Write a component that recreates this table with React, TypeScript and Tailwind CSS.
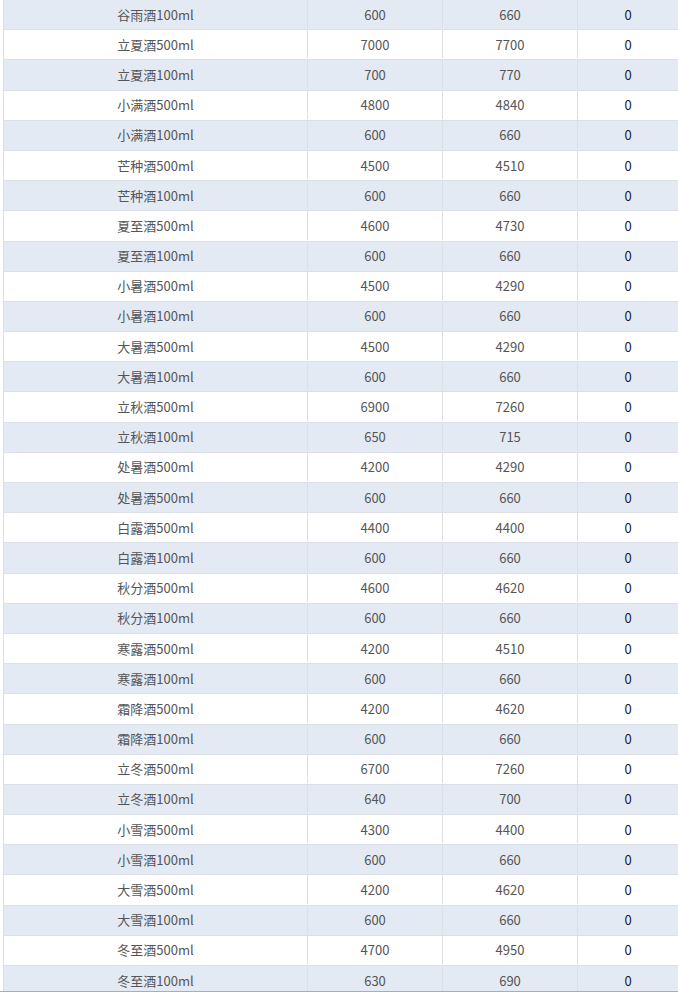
const rows: [string, number, number, number][] = [
  ["谷雨酒100ml", 600, 660, 0],
  ["立夏酒500ml", 7000, 7700, 0],
  ["立夏酒100ml", 700, 770, 0],
  ["小满酒500ml", 4800, 4840, 0],
  ["小满酒100ml", 600, 660, 0],
  ["芒种酒500ml", 4500, 4510, 0],
  ["芒种酒100ml", 600, 660, 0],
  ["夏至酒500ml", 4600, 4730, 0],
  ["夏至酒100ml", 600, 660, 0],
  ["小暑酒500ml", 4500, 4290, 0],
  ["小暑酒100ml", 600, 660, 0],
  ["大暑酒500ml", 4500, 4290, 0],
  ["大暑酒100ml", 600, 660, 0],
  ["立秋酒500ml", 6900, 7260, 0],
  ["立秋酒100ml", 650, 715, 0],
  ["处暑酒500ml", 4200, 4290, 0],
  ["处暑酒500ml", 600, 660, 0],
  ["白露酒500ml", 4400, 4400, 0],
  ["白露酒100ml", 600, 660, 0],
  ["秋分酒500ml", 4600, 4620, 0],
  ["秋分酒100ml", 600, 660, 0],
  ["寒露酒500ml", 4200, 4510, 0],
  ["寒露酒100ml", 600, 660, 0],
  ["霜降酒500ml", 4200, 4620, 0],
  ["霜降酒100ml", 600, 660, 0],
  ["立冬酒500ml", 6700, 7260, 0],
  ["立冬酒100ml", 640, 700, 0],
  ["小雪酒500ml", 4300, 4400, 0],
  ["小雪酒100ml", 600, 660, 0],
  ["大雪酒500ml", 4200, 4620, 0],
  ["大雪酒100ml", 600, 660, 0],
  ["冬至酒500ml", 4700, 4950, 0],
  ["冬至酒100ml", 630, 690, 0],
];

export default function App() {
  return (
    <div className="h-[993px] w-[678px] overflow-hidden bg-white font-['Microsoft_YaHei','Noto_Sans_CJK_SC',sans-serif] text-[13px] leading-none">
      {/* 表格视口：底部有一条深色分隔线 */}
      <div className="h-[992px] overflow-hidden border-b border-[#a4aebe]">
        <div className="ml-[3px] w-[675px] border-l border-[#dcdfe6]">
          {rows.map(([name, a, b, c], i) => (
            <div
              key={i}
              className={`grid h-[30.2px] grid-cols-[304px_135px_135px_1fr] border-b border-[#dcdfe6] pb-[1px] ${
                i % 2 === 0 ? "bg-[#e4eaf4]" : "bg-white"
              }`}
            >
              <div className="flex items-center justify-center border-r border-[#dcdfe6] text-[#555]">{name}</div>
              <div className="flex items-center justify-center border-r border-[#dcdfe6] text-[#555]">{a}</div>
              <div className="flex items-center justify-center border-r border-[#dcdfe6] text-[#555]">{b}</div>
              <div className="flex items-center justify-center text-[#1a1a2e]">{c}</div>
            </div>
          ))}
        </div>
      </div>
    </div>
  );
}
